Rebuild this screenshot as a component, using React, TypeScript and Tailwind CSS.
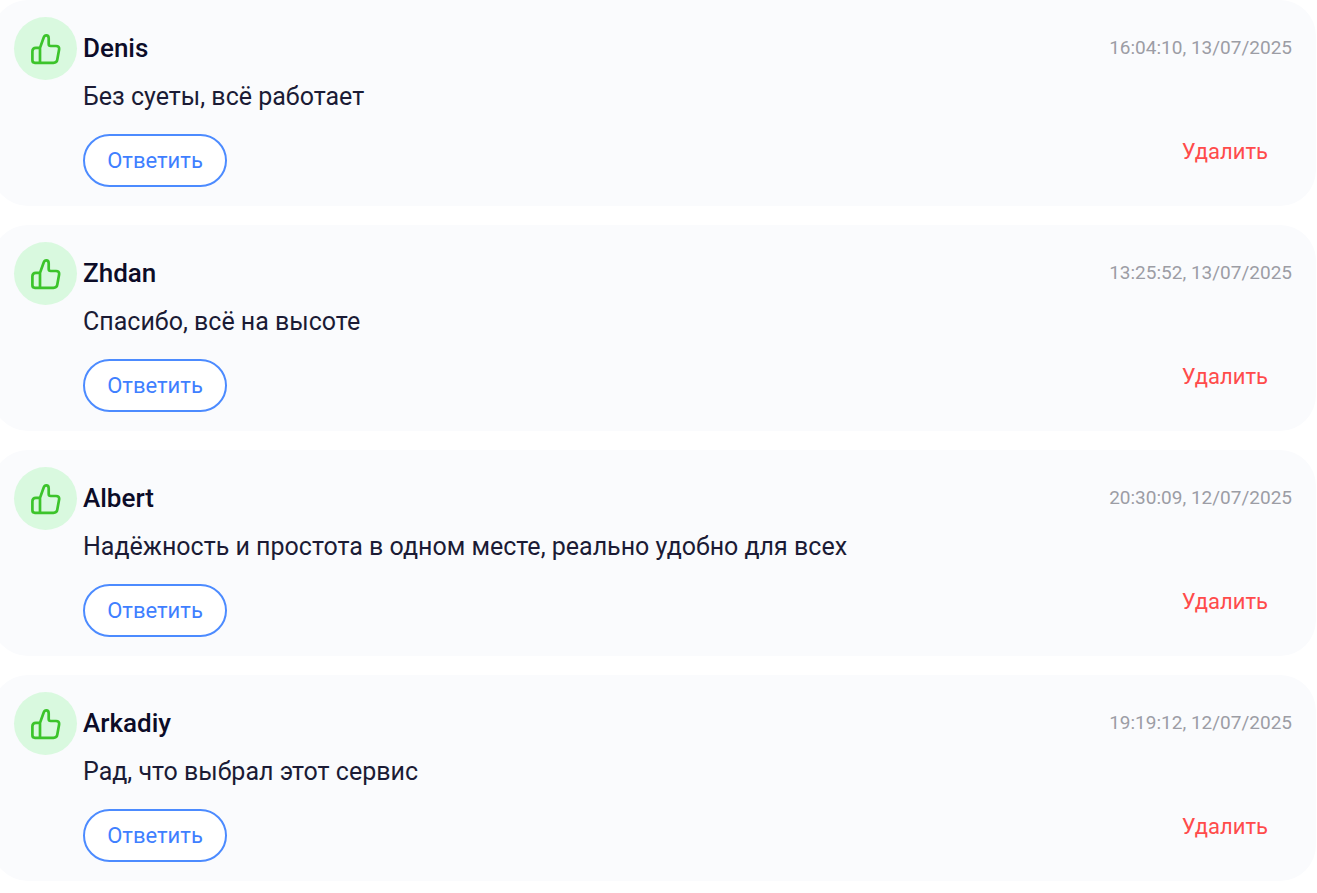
type Review = {
  id: number;
  author: string;
  text: string;
  date: string;
};

const reviews: Review[] = [
  { id: 1, author: "Denis", text: "Без суеты, всё работает", date: "16:04:10, 13/07/2025" },
  { id: 2, author: "Zhdan", text: "Спасибо, всё на высоте", date: "13:25:52, 13/07/2025" },
  {
    id: 3,
    author: "Albert",
    text: "Надёжность и простота в одном месте, реально удобно для всех",
    date: "20:30:09, 12/07/2025",
  },
  { id: 4, author: "Arkadiy", text: "Рад, что выбрал этот сервис", date: "19:19:12, 12/07/2025" },
];

export default function App() {
  return (
    <main className="overflow-hidden bg-white font-['Roboto','Noto_Sans',sans-serif]">
      <div className="-ml-2 mr-px flex flex-col gap-[19px]">
        {reviews.map((review) => (
          <ReviewCard key={review.id} review={review} />
        ))}
      </div>
    </main>
  );
}

function ReviewCard({ review }: { review: Review }) {
  return (
    <article className="flex gap-1.5 rounded-[36px] bg-[#fafbfd] pt-[17px] pr-6 pb-[19px] pl-[22px]">
      <div className="flex h-[63px] w-[63px] shrink-0 items-center justify-center rounded-full bg-[#d9f9df]">
        <ThumbUpIcon />
      </div>

      <div className="flex flex-1 flex-col">
        <div className="flex h-[62px] items-center justify-between">
          <h3 className="text-[26px] leading-8 font-medium text-[#0c0c28]">{review.author}</h3>
          <time className="text-[19px] leading-8 text-[#9c9da5]">{review.date}</time>
        </div>
        <p className="text-[25px] leading-9 text-[#1b1b35]">{review.text}</p>
        <div className="mt-[19px] flex items-start justify-between">
          <button
            type="button"
            className="h-[53px] w-36 rounded-full border-2 border-[#4c8bff] bg-white text-[22px] leading-8 text-[#3f7fff]"
          >
            Ответить
          </button>
          <button type="button" className="mr-6 text-[22px] leading-9 text-[#ff4b4b]">
            Удалить
          </button>
        </div>
      </div>
    </article>
  );
}

function ThumbUpIcon() {
  return (
    <svg
      aria-hidden="true"
      width="32"
      height="32"
      viewBox="0 0 32 32"
      fill="none"
      stroke="#3cc42b"
      strokeWidth="2.7"
      strokeLinecap="round"
      strokeLinejoin="round"
    >
      <path d="M10 14.9H5.8C3.7 14.9 2.4 16.2 2.4 18.3V27.3C2.4 28.9 3.3 29.8 4.9 29.8H23.4C25.6 29.8 27 28.7 27.3 26.6L29.1 16.6C29.5 14.4 28.3 13 26.1 13H20.6C19.4 13 18.7 12.3 18.7 11.1V5.5C18.7 3.5 17.8 2.4 16.3 2.4C15 2.4 14.2 3.1 13.7 4.5L10 14.9ZM10 14.9V29.8" />
    </svg>
  );
}
